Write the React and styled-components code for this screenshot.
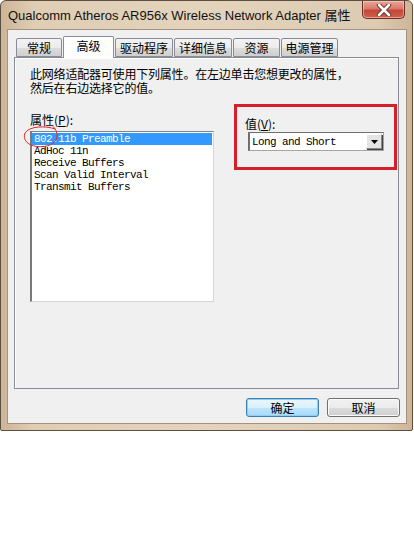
import React from "react";
import styled, { createGlobalStyle } from "styled-components";

const GlobalStyle = createGlobalStyle`
  html, body {
    margin: 0;
    padding: 0;
    background: #ffffff;
  }
  body {
    font-family: "Noto Sans CJK SC", "Noto Sans", sans-serif;
    font-size: 12px;
    color: #000;
  }
`;

const tabs = [
  { label: "常规", width: 46 },
  { label: "高级", width: 51, active: true },
  { label: "驱动程序", width: 58 },
  { label: "详细信息", width: 58 },
  { label: "资源", width: 47 },
  { label: "电源管理", width: 57 },
];

const properties = [
  "802.11b Preamble",
  "AdHoc 11n",
  "Receive Buffers",
  "Scan Valid Interval",
  "Transmit Buffers",
];

const App = () => {
  return (
    <>
      <GlobalStyle />
      <Window>
        <TitleBar>
          <Title>Qualcomm Atheros AR956x Wireless Network Adapter 属性</Title>
          <CloseButton>
            <svg width="16" height="12" viewBox="0 0 16 12">
              <path
                d="M3 1 L13 11 M13 1 L3 11"
                stroke="#5a2a25"
                strokeWidth="4.4"
                strokeLinecap="round"
              />
              <path
                d="M3 1 L13 11 M13 1 L3 11"
                stroke="#ffffff"
                strokeWidth="2.6"
                strokeLinecap="round"
              />
            </svg>
          </CloseButton>
        </TitleBar>
        <Client>
          <TabStrip>
            {tabs.map((t) => (
              <Tab key={t.label} $width={t.width} $active={t.active}>
                {t.label}
              </Tab>
            ))}
          </TabStrip>
          <Panel>
            <Description>
              <div>此网络适配器可使用下列属性。在左边单击您想更改的属性，</div>
              <div>然后在右边选择它的值。</div>
            </Description>
            <Row>
              <LeftColumn>
                <Label>
                  属性(<u>P</u>):
                </Label>
                <ListWrap>
                  <ListBox>
                    {properties.map((p, i) => (
                      <ListItem key={p} $selected={i === 0}>
                        {p}
                      </ListItem>
                    ))}
                  </ListBox>
                  <Scribble width="38" height="24" viewBox="0 0 38 24">
                    <path
                      d="M33 4 C 24 0.5, 7 1, 3 8 C 0.5 14, 5 20.5, 15 21.5 C 25 22.5, 34 19, 35 12 C 35.5 7, 33 3, 30.5 1"
                      fill="none"
                      stroke="#e2262a"
                      strokeWidth="1"
                    />
                  </Scribble>
                </ListWrap>
              </LeftColumn>
              <ValueBox>
                <Label>
                  值(<u>V</u>):
                </Label>
                <Select>
                  <SelectText>Long and Short</SelectText>
                  <SelectArrow>
                    <svg width="7" height="4" viewBox="0 0 7 4">
                      <path d="M0 0 L7 0 L3.5 4 Z" fill="#000" />
                    </svg>
                  </SelectArrow>
                </Select>
              </ValueBox>
            </Row>
          </Panel>
          <ButtonRow>
            <Button $primary>确定</Button>
            <Button>取消</Button>
          </ButtonRow>
        </Client>
      </Window>
    </>
  );
};

const Window = styled.div`
  width: 413px;
  height: 431px;
  box-sizing: border-box;
  border: 1px solid #5e4e40;
  border-radius: 6px 6px 2px 2px;
  background: linear-gradient(90deg, #cdb597 0%, #dfcdb4 8%, #e4d4bd 50%, #dccab1 92%, #cdb597 100%);
  display: flex;
  flex-direction: column;
  padding: 0 5px 0 6px;
`;

const TitleBar = styled.div`
  height: 28px;
  display: flex;
  align-items: flex-start;
  justify-content: space-between;
  padding-left: 1px;
`;

const Title = styled.div`
  font-family: "Liberation Sans", "Noto Sans CJK SC", sans-serif;
  font-size: 13px;
  line-height: 29px;
  color: #111;
  white-space: nowrap;
  overflow: hidden;
  flex: 1;
`;

const CloseButton = styled.div`
  flex: none;
  width: 43px;
  height: 18px;
  margin-right: 2px;
  box-sizing: border-box;
  border: 1px solid #6a2f28;
  border-top: none;
  border-radius: 0 0 5px 5px;
  background: linear-gradient(180deg, #e9a797 0%, #d97a6a 45%, #c4473a 55%, #d0614f 100%);
  display: flex;
  align-items: center;
  justify-content: center;
  box-shadow: inset 0 0 0 1px rgba(255, 220, 210, 0.5);
`;

const Client = styled.div`
  width: 400px;
  height: 395px;
  box-sizing: border-box;
  background: #f0f0f0;
  border: 1px solid #a6927c;
  padding: 6px 0 0 6px;
  display: flex;
  flex-direction: column;
`;

const TabStrip = styled.div`
  display: flex;
  align-items: flex-end;
  gap: 1px;
  height: 21px;
  margin-left: 2px;
  position: relative;
  z-index: 1;
`;

const Tab = styled.div`
  width: ${(p) => p.$width}px;
  height: ${(p) => (p.$active ? 22 : 19)}px;
  box-sizing: border-box;
  border: 1px solid #898c95;
  border-bottom: ${(p) => (p.$active ? "none" : "1px solid #898c95")};
  border-radius: 2px 2px 0 0;
  background: ${(p) =>
    p.$active ? "#ffffff" : "linear-gradient(180deg, #f3f3f3 0%, #ebebeb 50%, #dddddd 51%, #cfcfcf 100%)"};
  margin-bottom: ${(p) => (p.$active ? "-1px" : "0")};
  font-size: 12px;
  line-height: ${(p) => (p.$active ? "18px" : "17px")};
  text-align: center;
  color: #000;
`;

const Panel = styled.div`
  width: 385px;
  height: 332px;
  box-sizing: border-box;
  border: 1px solid #898c95;
  background: #f0f0f0;
  box-shadow: inset 1px 1px 0 #ffffff;
  padding: 9px 0 0 15px;
`;

const Description = styled.div`
  font-size: 12px;
  line-height: 14px;
  height: 28px;
  letter-spacing: -0.2px;
`;

const Row = styled.div`
  display: flex;
  align-items: flex-start;
  margin-top: 9px;
`;

const LeftColumn = styled.div`
  width: 184px;
  padding-top: 10px;
  display: flex;
  flex-direction: column;
  gap: 5px;
`;

const Label = styled.div`
  font-size: 12px;
  line-height: 12px;
  height: 12px;
  u {
    text-decoration-thickness: 1px;
    text-underline-offset: 1px;
  }
`;

const ListWrap = styled.div`
  position: relative;
`;

const ListBox = styled.div`
  width: 184px;
  height: 171px;
  box-sizing: border-box;
  background: #ffffff;
  border: 1px solid #d5d5d5;
  border-top-color: #828282;
  border-left: 2px solid #7a7a7a;
  padding: 1px 1px 0 0;
`;

const ListItem = styled.div`
  height: 12px;
  font-family: "Liberation Mono", monospace;
  font-size: 11px;
  letter-spacing: -0.6px;
  line-height: 12px;
  padding-left: 2px;
  white-space: nowrap;
  color: ${(p) => (p.$selected ? "#ffffff" : "#000000")};
  background: ${(p) => (p.$selected ? "#3399ff" : "transparent")};
`;

const Scribble = styled.svg`
  position: absolute;
  left: -8px;
  top: -6px;
  pointer-events: none;
`;

const ValueBox = styled.div`
  margin-left: 20px;
  width: 163px;
  height: 66px;
  box-sizing: border-box;
  border: 3px solid #d5202c;
  padding: 11px 0 0 8px;
  display: flex;
  flex-direction: column;
  gap: 2px;
`;

const Select = styled.div`
  margin-left: 3px;
  width: 136px;
  height: 19px;
  box-sizing: border-box;
  background: #ffffff;
  border: 1px solid #a5a5a5;
  border-top-color: #6f6f6f;
  border-left: 2px solid #6f6f6f;
  display: flex;
  align-items: center;
  justify-content: space-between;
  padding: 0 1px 0 2px;
`;

const SelectText = styled.span`
  font-family: "Liberation Mono", monospace;
  font-size: 11px;
  letter-spacing: -0.6px;
  line-height: 12px;
`;

const SelectArrow = styled.div`
  width: 16px;
  height: 15px;
  box-sizing: border-box;
  border: 1px solid #8a8a8a;
  border-top-color: #ffffff;
  border-left-color: #ffffff;
  box-shadow: 1px 1px 0 #404040;
  background: #e4e4e4;
  display: flex;
  align-items: center;
  justify-content: center;
`;

const ButtonRow = styled.div`
  display: flex;
  justify-content: flex-end;
  gap: 8px;
  margin-top: 9px;
  padding-right: 6px;
`;

const Button = styled.div`
  width: 73px;
  height: 19px;
  box-sizing: border-box;
  border: 1px solid ${(p) => (p.$primary ? "#3c7fb1" : "#707070")};
  border-radius: 3px;
  background: ${(p) =>
    p.$primary
      ? "linear-gradient(180deg, #eaf6fd 0%, #d9f0fc 50%, #bee6fd 51%, #a7d9f5 100%)"
      : "linear-gradient(180deg, #f2f2f2 0%, #ebebeb 50%, #dddddd 51%, #cfcfcf 100%)"};
  box-shadow: ${(p) => (p.$primary ? "inset 0 0 0 1px #8fd0f2" : "inset 0 0 0 1px #fbfbfb")};
  font-size: 12px;
  line-height: 17px;
  text-align: center;
`;

export default App;
